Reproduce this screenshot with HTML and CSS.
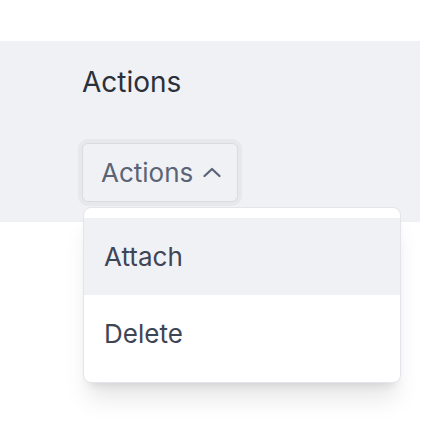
FILE: index.html
```html
<!DOCTYPE html>
<html>
<head>
<meta charset="utf-8">
<link rel="stylesheet" href="styles.css">
</head>
<body>
<div class="panel">
  <h2 class="title">Actions</h2>
  <div class="dropdown">
    <button class="trigger">
      <span>Actions</span>
      <svg class="chev" width="20" height="14" viewBox="0 0 20 14"><path d="M2.5 11 L10 4 L17.5 11" fill="none" stroke="#5b6475" stroke-width="2.3" stroke-linecap="round" stroke-linejoin="round"/></svg>
    </button>
    <div class="menu">
      <div class="item active">Attach</div>
      <div class="item">Delete</div>
    </div>
  </div>
</div>
</body>
</html>
```

FILE: styles.css
```css
html, body {
  margin: 0;
  padding: 0;
  background: #ffffff;
}
body {
  font-family: Inter, "Liberation Sans", sans-serif;
  padding-top: 41px;
  min-height: 434px;
  box-sizing: border-box;
  -webkit-font-smoothing: antialiased;
}
.panel {
  width: 420px;
  box-sizing: border-box;
  background: #f0f1f5;
  padding: 24px 0 20px 82px;
}
.title {
  margin: 0 0 44px 0;
  font-size: 28px;
  line-height: 34px;
  font-weight: 400;
  color: #2b303a;
}
.dropdown {
  position: relative;
  display: inline-block;
  vertical-align: top;
}
.trigger {
  display: flex;
  align-items: center;
  gap: 9px;
  font-family: inherit;
  font-size: 26px;
  line-height: 39px;
  color: #5b6475;
  background: #f0f1f5;
  border: 1px solid #d9dbe1;
  border-radius: 6px;
  padding: 9px 15px 9px 18px;
  box-shadow: 0 0 0 4px #e6e8ec;
  margin: 0;
}
.chev {
  display: block;
  margin-top: -2px;
}
.menu {
  position: absolute;
  z-index: 10;
  left: 1px;
  top: 64px;
  width: 318px;
  box-sizing: border-box;
  background: #ffffff;
  border: 1px solid #e3e5ea;
  border-radius: 8px;
  padding: 10px 0;
  box-shadow: 0 20px 25px -5px rgba(0,0,0,0.1), 0 8px 10px -6px rgba(0,0,0,0.1);
}
.item {
  font-size: 26px;
  line-height: 39px;
  padding: 19px 20px;
  color: #3e4555;
}
.item.active {
  background: #f0f1f5;
}
```
